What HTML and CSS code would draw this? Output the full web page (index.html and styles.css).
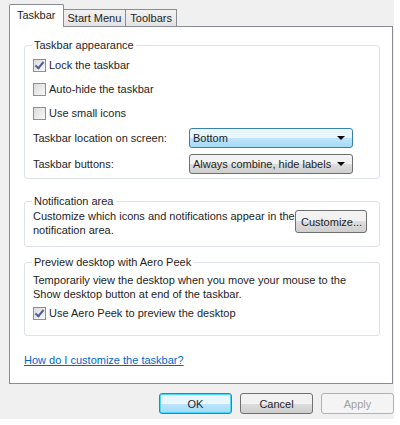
FILE: index.html
```html
<!DOCTYPE html>
<html lang="en">
<head>
  <meta charset="UTF-8">
  <title>Taskbar and Start Menu Properties</title>
  <link rel="stylesheet" href="styles.css">
</head>
<body>
  <div class="dialog">
    <div class="tabs">
      <div class="tab active">Taskbar</div>
      <div class="tab">Start Menu</div>
      <div class="tab">Toolbars</div>
    </div>
    <div class="panel">
      <fieldset class="group appearance">
        <legend>Taskbar appearance</legend>
        <label class="check"><span class="box checked"></span>Lock the taskbar</label>
        <label class="check"><span class="box"></span>Auto-hide the taskbar</label>
        <label class="check"><span class="box"></span>Use small icons</label>
        <div class="row">
          <span class="row-label">Taskbar location on screen:</span>
          <div class="select focus">Bottom<span class="arrow"></span></div>
        </div>
        <div class="row">
          <span class="row-label">Taskbar buttons:</span>
          <div class="select">Always combine, hide labels<span class="arrow"></span></div>
        </div>
      </fieldset>

      <fieldset class="group notify">
        <legend>Notification area</legend>
        <div class="notify-row">
          <p>Customize which icons and notifications appear in the notification area.</p>
          <button class="btn">Customize...</button>
        </div>
      </fieldset>

      <fieldset class="group peek">
        <legend>Preview desktop with Aero Peek</legend>
        <p>Temporarily view the desktop when you move your mouse to the Show desktop button at end of the taskbar.</p>
        <label class="check"><span class="box checked"></span>Use Aero Peek to preview the desktop</label>
      </fieldset>

      <a class="help" href="#">How do I customize the taskbar?</a>
    </div>
    <div class="actions">
      <button class="btn default">OK</button>
      <button class="btn">Cancel</button>
      <button class="btn disabled">Apply</button>
    </div>
  </div>
</body>
</html>
```

FILE: styles.css
```css
body {
  margin: 0;
  background: #ffffff;
  font-family: "Liberation Sans", Arial, sans-serif;
  font-size: 11px;
  color: #1e1e1e;
}
.dialog {
  width: 394px;
  height: 419px;
  background: #f0f0f0;
  padding: 5px 0 0 9px;
  box-sizing: border-box;
}
.tabs {
  display: flex;
  align-items: flex-end;
  height: 21px;
  position: relative;
  z-index: 1;
}
.tab {
  height: 16px;
  padding: 0 4px;
  line-height: 16px;
  border: 1px solid #898c95;
  border-bottom: none;
  background: linear-gradient(#f2f2f2, #e3e3e3);
  margin-left: -1px;
}
.tab.active {
  height: 22px;
  line-height: 20px;
  background: #ffffff;
  margin-left: 0;
  margin-bottom: -1px;
  padding: 0 7px;
  border-radius: 2px 2px 0 0;
}
.panel {
  width: 384px;
  height: 358px;
  box-sizing: border-box;
  background: #ffffff;
  border: 1px solid #898c95;
  padding: 12px 12px 0 14px;
}
.group {
  margin: 0;
  border: 1px solid #dde3e8;
  border-radius: 3px;
  padding: 0 8px 6px 8px;
}
.group legend {
  padding: 0 2px;
  margin-left: -1px;
}
.appearance {
  padding-top: 2px;
  padding-bottom: 1px;
}
.check {
  display: flex;
  align-items: center;
  height: 24px;
}
.box {
  width: 11px;
  height: 11px;
  border: 1px solid #8f8f8f;
  background: linear-gradient(135deg, #dcdcdc, #f8f8f8);
  margin-right: 3px;
  position: relative;
}
.box.checked::after {
  content: "";
  position: absolute;
  left: 3px;
  top: 0;
  width: 3px;
  height: 7px;
  border: solid #4a5f97;
  border-width: 0 2px 2px 0;
  transform: rotate(40deg);
}
.row {
  display: flex;
  align-items: center;
  height: 27px;
}
.row:first-of-type {
  height: 25px;
}
.row-label {
  width: 156px;
}
.select {
  position: relative;
  width: 164px;
  height: 20px;
  box-sizing: border-box;
  border: 1px solid #707070;
  border-radius: 3px;
  padding-left: 3px;
  line-height: 18px;
  background: linear-gradient(#f2f2f2 50%, #dddddd 50%, #cfcfcf);
}
.select.focus {
  border-color: #3c7fb1;
  background: linear-gradient(#eaf6fd 50%, #bee6fd 50%, #a7d9f5);
}
.arrow {
  position: absolute;
  right: 7px;
  top: 7px;
  border: 4px solid transparent;
  border-top: 4px solid #000000;
  border-bottom: none;
}
.notify {
  margin-top: 16px;
  padding: 0 12px 9px 8px;
}
.notify-row {
  display: flex;
  align-items: flex-start;
  justify-content: space-between;
}
p {
  margin: 0;
  line-height: 14px;
}
.notify p {
  width: 262px;
  margin-top: 2px;
}
.btn {
  font: inherit;
  color: #1e1e1e;
  height: 22px;
  border: 1px solid #707070;
  border-radius: 3px;
  background: linear-gradient(#f2f2f2 50%, #dddddd 50%, #cfcfcf);
  padding: 0 5px;
}
.notify .btn {
  width: 72px;
  height: 23px;
  margin-top: 3px;
}
.peek {
  margin-top: 9px;
  padding-bottom: 10px;
}
.peek p {
  margin-top: 5px;
}
.peek .check {
  margin-top: 0;
}
.help {
  display: inline-block;
  margin-top: 18px;
  color: #0066cc;
}
.actions {
  display: flex;
  justify-content: flex-end;
  gap: 8px;
  margin-top: 9px;
}
.actions .btn {
  width: 73px;
  height: 21px;
}
.btn.default {
  border-color: #3c7fb1;
  background: linear-gradient(#eaf6fd 50%, #bee6fd 50%, #a7d9f5);
  box-shadow: inset 0 0 0 1px #48d8fb;
}
.btn.disabled {
  color: #a0a0a0;
  border-color: #adb2b5;
  background: #f4f4f4;
}
```
